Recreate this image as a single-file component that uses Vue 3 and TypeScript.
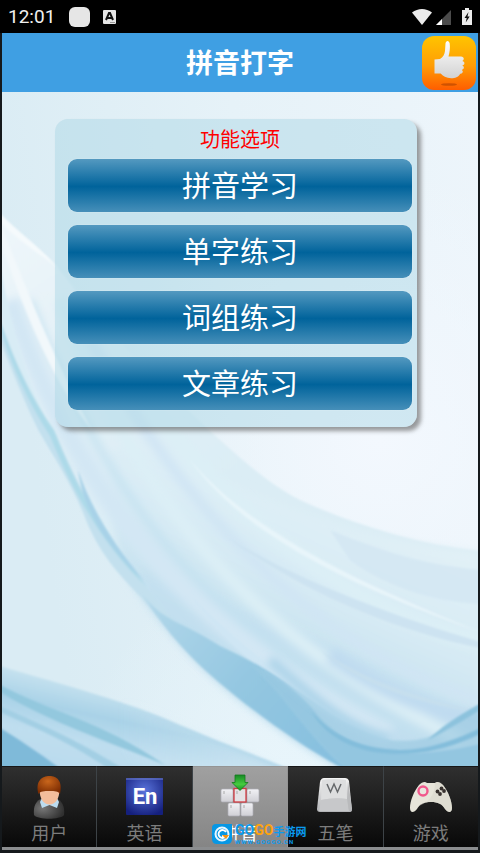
<script setup lang="ts">
import { ref } from 'vue'

interface Tab {
  id: string
  label: string
}

const title = '拼音打字'
const options: string[] = ['拼音学习', '单字练习', '词组练习', '文章练习']
const tabs: Tab[] = [
  { id: 'user', label: '用户' },
  { id: 'english', label: '英语' },
  { id: 'pinyin', label: '拼音' },
  { id: 'wubi', label: '五笔' },
  { id: 'games', label: '游戏' },
]
const active = ref('pinyin')
</script>

<template>
  <div class="app">
    <div class="status">
      <span class="clock">12:01</span>
      <span class="blob"></span>
      <svg class="badge-a" viewBox="0 0 13 14" aria-hidden="true">
        <rect width="13" height="14" rx="1" fill="#e6e6e6" />
        <path d="M3 10 6 3h1l3 7M4.300 8h4.400" fill="none" stroke="#111" stroke-width="2" />
        <path d="M7 12.500h5" stroke="#999" />
      </svg>
      <span class="spacer"></span>
      <svg class="signals" viewBox="0 0 60 18" aria-hidden="true">
        <path d="M0 4.500C6-.3 14-.3 20 4.500L10 17Z" fill="#ececec" />
        <path d="M24 17 39 2v15Z" fill="#4b4b4b" />
        <path d="M24 17 30 11v6Z" fill="#fff" />
        <path d="M50 2h3V0h4v2h3v15H50Z" fill="#ececec" />
        <path d="m56.500 4-4 6h2.200l-1 4.500 4-6h-2.200Z" fill="#111" />
      </svg>
    </div>

    <header class="header">
      <h1>{{ title }}</h1>
      <button class="like" aria-label="推荐">
        <svg viewBox="0 0 54 54" aria-hidden="true">
          <defs>
            <linearGradient id="orange" x1="0" y1="0" x2="0" y2="1">
              <stop offset="0" stop-color="#ffc400" />
              <stop offset=".55" stop-color="#ff9d05" />
              <stop offset="1" stop-color="#ff5d00" />
            </linearGradient>
            <linearGradient id="hand" x1="0" y1="0" x2="0" y2="1">
              <stop offset="0" stop-color="#fff" />
              <stop offset="1" stop-color="#d2d2d2" />
            </linearGradient>
          </defs>
          <rect width="54" height="54" rx="12" fill="url(#orange)" />
          <ellipse cx="27" cy="48.500" rx="8" ry="1.300" fill="#cf5200" />
          <path
            d="M12.500 23.500 18 23c3-1.500 4.500-4.500 5-8l.5-7.500c.4-3.500 3.600-3.500 4.200 0 .6 4.500 0 8.500-1.200 13H39c3.500 0 3.500 4 1 4.500 3.500.5 3 4.300 0 4.600 2.800.6 2.300 4-.3 4.300 2 .8 1.200 3.700-1.500 3.800-2 3.500-5 4.500-9 4.500-5 0-8.500-2-10.500-4.700h-6.200Z"
            fill="url(#hand)"
          />
        </svg>
      </button>
    </header>

    <main class="content">
      <svg class="waves" viewBox="2 92 476 674" preserveAspectRatio="none" aria-hidden="true">
        <defs>
          <linearGradient id="sky" x1="0" y1=".2" x2="1" y2="0">
            <stop offset="0" stop-color="#daecf4" />
            <stop offset=".5" stop-color="#e6f2f8" />
            <stop offset="1" stop-color="#edf5fb" />
          </linearGradient>
          <radialGradient id="glow" gradientUnits="userSpaceOnUse" cx="380" cy="440" r="270">
            <stop offset="0" stop-color="#f3f8fe" />
            <stop offset="1" stop-color="#f3f8fe" stop-opacity="0" />
          </radialGradient>
          <radialGradient id="glow2" gradientUnits="userSpaceOnUse" cx="290" cy="770" r="210">
            <stop offset="0" stop-color="#e8f5fb" />
            <stop offset="1" stop-color="#e8f5fb" stop-opacity="0" />
          </radialGradient>
          <linearGradient id="veil" gradientUnits="userSpaceOnUse" x1="330" y1="490" x2="240" y2="690">
            <stop offset="0" stop-color="#e2f1f7" />
            <stop offset=".45" stop-color="#d6eaf4" />
            <stop offset="1" stop-color="#b9dbec" />
          </linearGradient>
          <linearGradient id="upper" gradientUnits="userSpaceOnUse" x1="0" y1="230" x2="180" y2="520">
            <stop offset="0" stop-color="#eef6fa" />
            <stop offset=".5" stop-color="#e2f0f7" />
            <stop offset="1" stop-color="#dbedf5" />
          </linearGradient>
          <linearGradient id="ribbon" gradientUnits="userSpaceOnUse" x1="150" y1="590" x2="350" y2="760">
            <stop offset="0" stop-color="#b3d8ea" />
            <stop offset=".5" stop-color="#94c7e1" />
            <stop offset="1" stop-color="#85bfdf" />
          </linearGradient>
          <linearGradient id="corner" gradientUnits="userSpaceOnUse" x1="40" y1="675" x2="20" y2="766">
            <stop offset="0" stop-color="#c6e2ef" />
            <stop offset=".3" stop-color="#a9d2e7" />
            <stop offset=".6" stop-color="#bfdeef" />
            <stop offset="1" stop-color="#b9daed" />
          </linearGradient>
          <linearGradient id="fade" gradientUnits="userSpaceOnUse" x1="120" y1="0" x2="300" y2="0">
            <stop offset="0" stop-color="#d8ebf5" stop-opacity="0" />
            <stop offset="1" stop-color="#d8ebf5" />
          </linearGradient>
          <filter id="soft1"><feGaussianBlur stdDeviation="1" /></filter>
          <filter id="soft4" x="-20%" y="-20%" width="140%" height="140%"><feGaussianBlur stdDeviation="4" /></filter>
        </defs>
        <rect x="2" y="92" width="476" height="674" fill="url(#sky)" />
        <rect x="2" y="92" width="476" height="674" fill="url(#glow)" />
        <rect x="2" y="92" width="476" height="674" fill="url(#glow2)" />

        <path
          d="M0 214C22 236 38 246 58 268 105 330 165 390 220 440 245 462 270 485 300 500 355 525 420 545 480 551V770H346C300 746 245 706 205 670 175 640 160 620 142 596 120 575 100 556 84 515 70 480 50 454 38 430 22 398 12 370 0 330Z"
          fill="url(#upper)" filter="url(#soft1)"
        />
        <path
          d="M110 450C150 450 200 470 245 490 320 522 400 545 480 552V770H346C300 746 245 706 205 670 175 640 160 620 142 596 120 575 110 530 110 450Z"
          fill="url(#veil)" filter="url(#soft4)"
        />
        <path d="M142 566C210 610 260 600 480 720V770H346C260 722 190 660 142 596Z" fill="#c3dff0" opacity=".6" filter="url(#soft4)" />

        <g fill="none" filter="url(#soft4)">
          <path d="M10 300C85 520 210 640 390 735" stroke="#d3e7f4" stroke-width="20" />
          <path d="M30 300C120 540 250 655 420 735" stroke="#c3e1f0" stroke-width="6" />
          <path d="M60 300C155 540 280 650 460 740" stroke="#dceff6" stroke-width="13" />
          <path d="M80 320C200 550 350 660 480 700" stroke="#d0e5f4" stroke-width="10" />
          <path d="M130 380C260 560 390 625 500 645" stroke="#dceff6" stroke-width="18" />
          <path d="M330 655C380 690 430 713 500 726" stroke="#c0dbf0" stroke-width="16" />
        </g>
        <g filter="url(#soft1)">
          <path d="M225 536C300 582 390 615 480 642V648C390 630 300 590 225 536Z" fill="#cde3f1" />
          <path d="M320 650C370 684 430 700 480 712 430 706 365 690 320 650Z" fill="#c6dfee" />
          <path d="M350 560C390 590 440 602 480 604V570C430 565 390 555 330 530Z" fill="#d1e6f2" opacity=".7" />
        </g>

        <g filter="url(#soft1)">
          <path d="M0 214C22 236 38 246 58 268 40 254 20 242 0 222Z" fill="#f5fafc" />
          <path d="M0 222C30 300 60 370 92 430 50 380 20 300 0 240Z" fill="#f2f8fb" />
          <path d="M0 262C10 330 34 400 58 440 30 410 10 360 0 310Z" fill="#d8ecf5" />
          <path d="M0 318C16 368 36 404 56 434 78 486 108 545 148 590 176 622 190 640 205 660 180 645 160 620 142 598 118 574 98 552 84 515 70 480 50 452 38 430 22 398 12 370 0 340Z" fill="#c3e0ee" />
          <path d="M0 320C14 362 34 402 54 430 76 488 108 542 148 588 108 552 74 496 50 436 28 402 10 364 0 326Z" fill="#addAe9" />
          <path d="M78 470C92 510 114 545 145 582 112 552 84 515 78 470Z" fill="#a8d2e8" />
          <path d="M190 460C250 530 350 580 480 632 350 586 245 536 190 460Z" fill="#e8f5fa" />
          <path d="M190 595C250 655 330 720 410 746 320 724 245 668 190 595Z" fill="#cfe6f4" />
        </g>

        <path
          d="M142 594C165 623 180 620 220 646 260 665 290 680 320 718 350 750 395 764 480 744V770H346C300 746 245 706 205 670 180 647 160 622 142 594Z"
          fill="url(#ribbon)" filter="url(#soft1)"
        />
        <path d="M250 665C300 682 330 726 392 740 440 745 455 720 480 704V770H346C310 740 280 690 250 665Z" fill="#9bcae2" opacity=".65" filter="url(#soft1)" />
        <path d="M270 660C310 695 350 732 390 738" fill="none" stroke="#a9d2e8" stroke-width="9" filter="url(#soft4)" />
        <path d="M310 710C335 740 365 748 400 750 430 750 460 738 480 728V734C460 744 430 754 400 754 365 754 330 744 310 710Z" fill="#83bddb" filter="url(#soft1)" />
        <path d="M480 704C455 717 440 728 428 740 445 732 460 722 480 710Z" fill="#8cc2dd" filter="url(#soft1)" />

        <path d="M0 666C60 684 130 702 180 725 220 742 255 755 292 770H0Z" fill="url(#corner)" filter="url(#soft1)" />
        <path d="M50 670C120 700 230 740 300 780H150Z" fill="url(#fade)" opacity=".7" filter="url(#soft4)" />
        <path d="M0 685C50 712 100 720 165 765 100 738 50 722 0 692Z" fill="#93c8de" filter="url(#soft1)" />
        <path d="M0 706C35 722 75 738 125 770H110C70 742 35 728 0 712Z" fill="#a3cfe4" filter="url(#soft1)" />
        <path d="M0 728C20 740 42 755 62 770H0Z" fill="#7fbad9" filter="url(#soft1)" />
      </svg>

      <section class="panel">
        <h2>功能选项</h2>
        <button v-for="option in options" :key="option" class="option">{{ option }}</button>
      </section>
    </main>

    <nav class="tabs">
      <button
        v-for="tab in tabs"
        :key="tab.id"
        class="tab"
        :class="{ active: active === tab.id }"
        @click="active = tab.id"
      >
        <svg v-if="tab.id === 'user'" class="icon" viewBox="0 0 48 48" aria-hidden="true">
          <defs>
            <radialGradient id="hair" cx=".45" cy=".3" r=".7">
              <stop offset="0" stop-color="#c9661c" />
              <stop offset="1" stop-color="#7c2c02" />
            </radialGradient>
            <radialGradient id="suit" cx=".3" cy=".5" r=".7">
              <stop offset="0" stop-color="#777" />
              <stop offset="1" stop-color="#303030" />
            </radialGradient>
          </defs>
          <path d="M9 42C8 33 11 27 18 25h12c7 2 10 8 9 17-4 5-26 5-30 0Z" fill="url(#suit)" />
          <path d="m15 29 2-4h15l2 4-2 6-7.500-3-7.500 3Z" fill="#bcdcf0" />
          <path d="M14.500 16h20c0 9-3.500 15.500-10 15.500S14.500 25 14.500 16Z" fill="#f3bd9b" />
          <path d="M13.500 21C10 8 17 3 24.500 3S38 8 35 21c-2-3-5-3-10.500-3S15.500 18 13.500 21Z" fill="url(#hair)" />
        </svg>
        <svg v-else-if="tab.id === 'english'" class="icon" viewBox="0 0 48 48" aria-hidden="true">
          <defs>
            <radialGradient id="blue" cx=".5" cy=".35" r=".7">
              <stop offset="0" stop-color="#5a74dc" />
              <stop offset="1" stop-color="#15207e" />
            </radialGradient>
          </defs>
          <rect x="5" y="5" width="37" height="37" rx="1" fill="url(#blue)" />
          <path d="M5 6h37" stroke="#7383cf" />
          <text class="en" x="24" y="31" text-anchor="middle">En</text>
        </svg>
        <svg v-else-if="tab.id === 'pinyin'" class="icon" viewBox="0 0 48 48" aria-hidden="true">
          <defs>
            <linearGradient id="key" x1="0" y1="0" x2="0" y2="1">
              <stop offset="0" stop-color="#f2f2f5" />
              <stop offset="1" stop-color="#cfcfd5" />
            </linearGradient>
            <linearGradient id="green" x1="0" y1="0" x2="0" y2="1">
              <stop offset="0" stop-color="#178a25" />
              <stop offset=".6" stop-color="#45cc3f" />
              <stop offset="1" stop-color="#129020" />
            </linearGradient>
          </defs>
          <g fill="url(#key)" stroke="#aeaeb6" stroke-width=".7">
            <rect x="5" y="16" width="12" height="13" rx="1.500" />
            <rect x="31" y="16" width="12" height="13" rx="1.500" />
            <rect x="12" y="30" width="12" height="13" rx="1.500" />
            <rect x="25" y="30" width="12" height="13" rx="1.500" />
          </g>
          <rect x="18" y="15.500" width="12" height="13.500" fill="#e4e2e5" stroke="#d23b42" stroke-width="1.300" />
          <path d="M8 18v3M21 18v3M34 18v3M15 32v3M28 32v3" stroke="#aaa" />
          <path d="M19 2h10v7.500h3L24 17.500 16 9.500h3Z" fill="url(#green)" stroke="#117a1c" stroke-width=".8" />
        </svg>
        <svg v-else-if="tab.id === 'wubi'" class="icon" viewBox="0 0 48 48" aria-hidden="true">
          <defs>
            <linearGradient id="cap" x1="0" y1="0" x2="0" y2="1">
              <stop offset="0" stop-color="#f4f4f4" />
              <stop offset="1" stop-color="#b4b5b8" />
            </linearGradient>
          </defs>
          <path d="M9 9q1-4 4-4h21q3 0 4 3l3 29q0 2-3 2H9q-3 0-3-3Z" fill="url(#cap)" />
          <path d="M11 7q12-2 24 0l1 19q-12-2-26 1Z" fill="#dddedf" />
          <path d="M10 27q13-3 26-1l2 12H8Z" fill="#c7c8ca" />
          <path d="m36 26 1-18 4 28-3 2Z" fill="#b9babc" />
          <path d="m16 11 3.500 8 3.500-8 3.500 8 3.500-8" fill="none" stroke="#65686b" stroke-width="1.500" />
        </svg>
        <svg v-else class="icon" viewBox="0 0 48 48" aria-hidden="true">
          <path
            d="M12 12c3-3 6-4 8-2h8c2-2 5-1 8 2 5 6 9 16 9 23 0 5-4 5-7 1-3-5-7-7-14-7s-11 2-14 7c-3 4-7 4-7-1 0-7 4-17 9-23Z"
            fill="#e7e5da"
          />
          <path d="M28 10c2-2 5-1 8 2 5 6 9 16 9 23 0 5-4 5-7 1-3-5-7-7-14-7-5 0-9 1-12 4C22 29 28 22 28 10Z" fill="#d7d5ca" opacity=".5" />
          <circle cx="16" cy="18" r="4.500" fill="#e9e6df" stroke="#f1588c" stroke-width="2.400" />
          <g fill="#38322f">
            <circle cx="30.500" cy="18.500" r="1.900" />
            <circle cx="34.500" cy="15.500" r="1.900" />
            <circle cx="33" cy="21" r="1.900" />
            <circle cx="37" cy="18" r="1.900" />
          </g>
        </svg>
        <span class="label">{{ tab.label }}</span>
      </button>
    </nav>
    <div class="base"></div>

    <div class="mark">
      <svg class="mark-logo" viewBox="0 0 22 22" aria-hidden="true">
        <path d="M5 1h16v15q0 5-5 5H6q-5 0-5-5V5q0-4 4-4Z" fill="#0797e4" />
        <circle cx="11" cy="11" r="6.500" fill="none" stroke="#e9f7ff" stroke-width="2" />
        <path d="M15 9a4 4 0 1 0 0 4h-4" fill="none" stroke="#fff" stroke-width="1.800" />
        <path d="M11 12h7l-3 4Z" fill="#f39312" />
      </svg>
      <div class="mark-text">
        <div class="mark-name"><b>GO</b><b class="gold">GO</b><span>手游网</span></div>
        <div class="mark-site">WWW.GOGGO.CN</div>
      </div>
    </div>
  </div>
</template>

<style>
body {
  margin: 0;
  background: #000;
}
</style>

<style scoped>
.app {
  position: relative;
  display: flex;
  flex-direction: column;
  box-sizing: border-box;
  min-height: 100vh;
  padding: 0 2px;
  background: #15191c;
  font-family: "Noto Sans CJK SC", "Noto Sans", sans-serif;
}
button {
  padding: 0;
  border: 0;
  background: none;
  font-family: inherit;
  cursor: pointer;
}
h1,
h2 {
  margin: 0;
}
.status {
  display: flex;
  align-items: center;
  height: 33px;
  margin: 0 -2px;
  padding: 0 8px;
  background: #000;
}
.clock {
  width: 61px;
  color: #f0f0f0;
  font: 19px/32px Roboto, sans-serif;
}
.blob {
  width: 21px;
  height: 20px;
  border-radius: 6px;
  background: #e6e6e6;
}
.badge-a {
  width: 13px;
  height: 14px;
  margin-left: 13px;
}
.spacer {
  flex: 1;
}
.signals {
  width: 60px;
  height: 18px;
}
.header {
  display: grid;
  grid-template-columns: 54px 1fr 54px;
  align-items: center;
  height: 59px;
  padding: 0 2px;
  background: #3f9fe3;
}
.header h1 {
  grid-column: 2;
  color: #fff;
  font-size: 27px;
  font-weight: 700;
  line-height: 40px;
  padding-bottom: 2px;
  text-align: center;
}
.like,
.like svg {
  display: block;
  width: 54px;
  height: 54px;
}
.content {
  position: relative;
  flex: 1;
  padding: 27px 61px 27px 53px;
}
.waves {
  position: absolute;
  inset: 0;
  width: 100%;
  height: 100%;
}
.panel {
  position: relative;
  display: flex;
  flex-direction: column;
  gap: 13px;
  padding: 0 5px 17px 13px;
  border-radius: 13px;
  background: rgba(173, 216, 230, 0.5);
  box-shadow: 4px 4px 4px rgba(90, 90, 90, 0.6);
}
.panel h2 {
  height: 40px;
  margin-bottom: -13px;
  color: #f00;
  font-size: 20px;
  font-weight: 400;
  line-height: 40px;
  text-align: center;
}
.option {
  height: 53px;
  padding-bottom: 2px;
  border-radius: 9px;
  background: linear-gradient(#5499c0, #00639b 52%, #468fb9);
  box-shadow: 0 0 1px #fff;
  color: #fff;
  font-size: 29px;
  line-height: 51px;
}
.tabs {
  display: flex;
  height: 81px;
  background: linear-gradient(#303030, #101010 80%, #080808);
}
.tab {
  display: flex;
  flex: 1;
  flex-direction: column;
  align-items: center;
  box-sizing: border-box;
  padding-top: 6px;
  border-top: 1px solid #171717;
  border-right: 1px solid #3d4347;
}
.tab:last-child {
  border-right: 0;
}
.tab.active {
  border-color: #949494;
  background: linear-gradient(#a0a0a0, #858585);
}
.icon {
  width: 48px;
  height: 48px;
}
.en {
  fill: #fff;
  font: 700 22px Roboto, sans-serif;
}
.label {
  color: #7c7c7c;
  font-size: 18px;
  line-height: 22px;
}
.active .label {
  color: #fff;
}
.base {
  height: 3px;
  margin-bottom: 3px;
  background: #8b8d8f;
}
.mark {
  position: absolute;
  bottom: 8px;
  left: 211px;
  display: flex;
  align-items: center;
  gap: 2px;
  color: #0a9bf0;
  pointer-events: none;
}
.mark-logo {
  width: 22px;
  height: 22px;
}
.mark-name {
  display: flex;
  align-items: center;
  height: 15px;
  font-size: 11px;
  font-weight: 700;
}
.mark-name b {
  font: 700 14px/15px Roboto, sans-serif;
}
.mark-name .gold {
  color: #ffa30d;
}
.mark-site {
  font: 700 6px/7px Roboto, sans-serif;
  letter-spacing: 1px;
}
</style>
